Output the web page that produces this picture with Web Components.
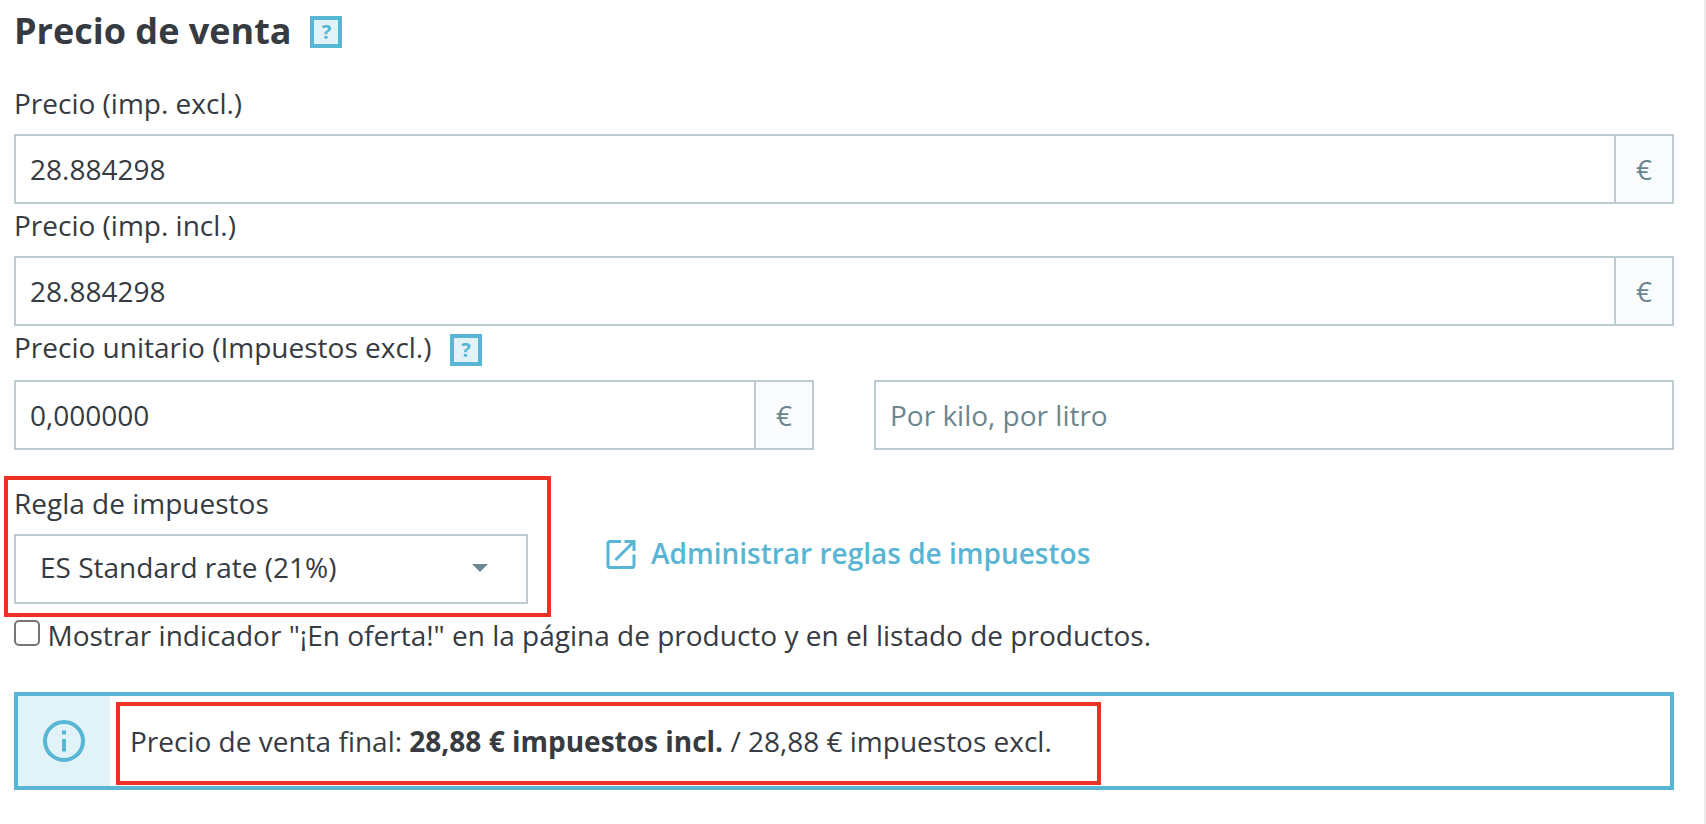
<!DOCTYPE html>
<html lang="es">
<head>
<meta charset="utf-8">
<title>Precio de venta</title>
<style>
html,body{margin:0;height:100%}
body{font:28px/42px "Open Sans","Noto Sans",sans-serif;color:#363a41;background:#fff;overflow:hidden}
</style>
</head>
<body>
<price-panel></price-panel>
<script>
const define = (name, html) => customElements.define(name, class extends HTMLElement {
  constructor() {
    super();
    const t = document.createElement('template');
    t.innerHTML = html;
    this.attachShadow({ mode: 'open' }).append(t.content.cloneNode(true));
  }
});

define('help-box', `
<style>
:host{display:flex;box-sizing:border-box;width:32px;height:32px;border:4px solid #58b5d3;background:#e1f3f8;color:#58b5d3;
align-items:center;justify-content:center;font-size:20px;font-weight:700;line-height:24px}
</style><span>?</span>`);

define('field-label', `
<style>:host{display:flex;height:42px;white-space:nowrap;margin-bottom:10px}</style><slot></slot><slot name="help"></slot>`);

define('text-field', `
<style>
:host{display:flex;box-sizing:border-box;height:70px;border:2px solid #bbcdd2;background:#fff;align-items:stretch}
.value{flex:1;padding:12px 14px;white-space:nowrap}
:host([placeholder]) .value{color:#6c868e}
::slotted([slot=unit]){box-sizing:border-box;width:58px;border-left:2px solid #bbcdd2;background:#fafbfc;color:#6c868e;
padding:12px 0;text-align:center}
</style><div class="value"><slot></slot></div><slot name="unit"></slot>`);

define('select-field', `
<style>
:host{display:flex;box-sizing:border-box;width:514px;height:70px;border:2px solid #bbcdd2;padding:10px 38px 14px 24px;justify-content:space-between;align-items:center}
svg{display:block;margin-top:1px}
</style><span><slot></slot></span><svg width="16" height="8"><path d="M0 0H16L8 8Z" fill="#6c868e"/></svg>`);

define('external-link', `
<style>
:host{display:flex;color:#58b5d3;font-weight:600;white-space:nowrap;gap:15px}
svg{display:block;margin-top:8px}
</style><svg width="30" height="30" viewBox="0 0.500 30 30" fill="none" stroke="#58b5d3" stroke-width="3"><path d="M15 2H4Q2 2 2 4V26Q2 28 4 28H26Q28 28 28 26V15M18.500 2H28V11.500M27 3L9.500 20.500"/></svg><span><slot></slot></span>`);

define('check-option', `
<style>
:host{display:flex;white-space:nowrap;gap:7.500px}
i{box-sizing:border-box;width:26px;height:26px;border:2px solid #767676;border-radius:5px;margin-top:6px;background:#fff}
</style><i></i><span><slot></slot></span>`);

define('info-alert', `
<style>
:host{display:flex;box-sizing:border-box;height:98px;border:4px solid #58b5d3}
.icon{width:92px;background:#e1f3f8;display:flex;align-items:center;justify-content:center}
.text{padding:24px 0 24px 20px;white-space:nowrap}
</style>
<div class="icon"><svg width="42" height="42" viewBox="0 0 42 42"><circle cx="21" cy="21" r="19" fill="none" stroke="#58b5d3" stroke-width="4"/><path d="M19 10.500h4v4h-4zM19 19h4v12.500h-4z" fill="#58b5d3"/></svg></div>
<div class="text"><slot></slot></div>`);

define('highlight-frame', `<style>:host{display:block;box-sizing:border-box;position:absolute;border:4px solid #ee3124;pointer-events:none}</style>`);

define('price-panel', `
<style>
:host{display:block;box-sizing:border-box;height:824px;padding:0 30px 0 14px;border-right:2px solid #eaeaea;position:relative}
header{display:flex;height:82px}
h2{margin:0;font-size:36px;line-height:62px;font-weight:700;white-space:nowrap;width:296px}
header help-box{margin-top:16px;padding-left:1px}
.unit-label{margin-bottom:12px}
.unit-label help-box{margin:8px 0 0 19px;padding-right:1px}
.pair{display:grid;grid-template-columns:1fr 1fr;gap:60px}
.tax{display:flex;gap:78px;margin-top:32px}
external-link{margin-top:50px}
check-option{margin-top:10px}
info-alert{margin-top:36px}
.rule{left:4px;top:476px;width:547px;height:141px}
.final{left:116px;top:702px;width:985px;height:83px}
</style>
<header><h2>Precio de venta</h2><help-box></help-box></header>
<field-label>Precio (imp. excl.)</field-label>
<text-field>28.884298<span slot="unit">€</span></text-field>
<field-label>Precio (imp. incl.)</field-label>
<text-field>28.884298<span slot="unit">€</span></text-field>
<field-label class="unit-label">Precio unitario (Impuestos excl.)<help-box slot="help"></help-box></field-label>
<div class="pair">
<text-field>0,000000<span slot="unit">€</span></text-field>
<text-field placeholder>Por kilo, por litro</text-field>
</div>
<div class="tax">
<div><field-label>Regla de impuestos</field-label><select-field>ES Standard rate (21%)</select-field></div>
<external-link>Administrar reglas de impuestos</external-link>
</div>
<check-option>Mostrar indicador "¡En oferta!" en la página de producto y en el listado de productos.</check-option>
<info-alert>Precio de venta final: <strong>28,88 € impuestos incl.</strong> / 28,88 € impuestos excl.</info-alert>
<highlight-frame class="rule"></highlight-frame>
<highlight-frame class="final"></highlight-frame>`);
</script>
</body>
</html>
